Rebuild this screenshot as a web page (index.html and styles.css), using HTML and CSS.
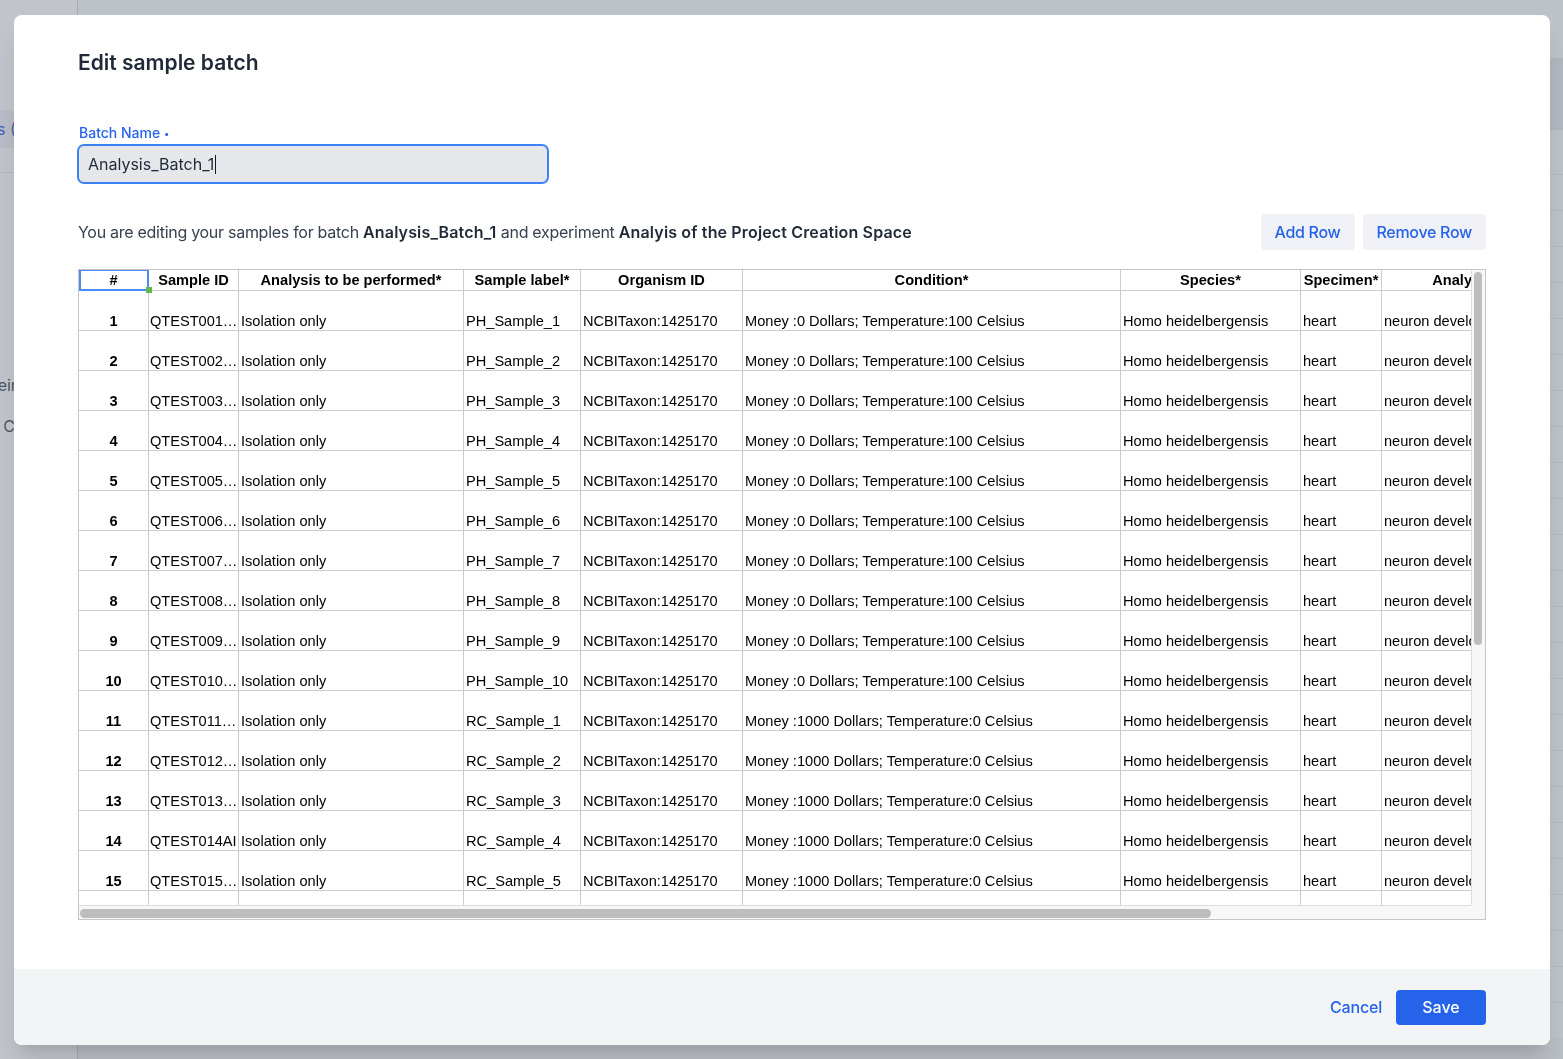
FILE: index.html
```html
<!DOCTYPE html>
<html lang="en">
<head>
<meta charset="utf-8">
<title>Edit sample batch</title>
<link rel="stylesheet" href="styles.css">
</head>
<body>
<div class="page">
  <aside class="sidebar">
    <div class="nav-item active"><span class="nav-text t1">Projects (2)</span></div>
    <div class="nav-sep"></div>
    <div class="nav-item lower"><span class="nav-text t2">Protein</span></div>
    <div class="nav-item"><span class="nav-text t3">Data C</span></div>
  </aside>
  <main class="main">
    <div class="main-head"></div>
    <div class="main-band"></div>
    <div class="bg-list">
      <div class="bg-row"></div><div class="bg-row"></div><div class="bg-row"></div><div class="bg-row"></div>
      <div class="bg-row"></div><div class="bg-row"></div><div class="bg-row"></div><div class="bg-row"></div>
      <div class="bg-row"></div><div class="bg-row"></div><div class="bg-row"></div><div class="bg-row"></div>
      <div class="bg-row"></div><div class="bg-row"></div><div class="bg-row"></div><div class="bg-row"></div>
      <div class="bg-row"></div><div class="bg-row"></div><div class="bg-row"></div><div class="bg-row"></div>
      <div class="bg-row"></div><div class="bg-row"></div><div class="bg-row"></div><div class="bg-row"></div>
    </div>
  </main>
</div>
<div class="overlay"></div>

<div class="modal">
  <div class="modal-body">
    <h2 class="title">Edit sample batch</h2>

    <div class="field">
      <label class="field-label">Batch Name <span class="req">•</span></label>
      <div class="input"><span class="input-text">Analysis_Batch_1</span><span class="caret"></span></div>
    </div>

    <div class="info-row">
      <p class="info">You are editing your samples for batch <b>Analysis_Batch_1</b> and experiment <b>Analyis of the Project Creation Space</b></p>
      <div class="actions">
        <button class="btn-soft">Add Row</button>
        <button class="btn-soft">Remove Row</button>
      </div>
    </div>

    <div class="grid">
      <div class="viewport">
        <table class="sheet">
          <colgroup>
            <col class="c-num"><col class="c-id"><col class="c-an"><col class="c-label"><col class="c-org"><col class="c-cond"><col class="c-spec"><col class="c-sp2"><col class="c-last">
          </colgroup>
          <thead>
            <tr>
              <th class="selected">#<span class="fill-handle"></span></th>
              <th>Sample ID</th>
              <th>Analysis to be performed*</th>
              <th>Sample label*</th>
              <th>Organism ID</th>
              <th>Condition*</th>
              <th>Species*</th>
              <th>Specimen*</th>
              <th>Analyte*</th>
            </tr>
          </thead>
          <tbody>
            <tr><td class="num">1</td><td class="id">QTEST001AE</td><td>Isolation only</td><td>PH_Sample_1</td><td>NCBITaxon:1425170</td><td>Money :0 Dollars; Temperature:100 Celsius</td><td>Homo heidelbergensis</td><td>heart</td><td>neuron development</td></tr>
            <tr><td class="num">2</td><td class="id">QTEST002AM</td><td>Isolation only</td><td>PH_Sample_2</td><td>NCBITaxon:1425170</td><td>Money :0 Dollars; Temperature:100 Celsius</td><td>Homo heidelbergensis</td><td>heart</td><td>neuron development</td></tr>
            <tr><td class="num">3</td><td class="id">QTEST003AU</td><td>Isolation only</td><td>PH_Sample_3</td><td>NCBITaxon:1425170</td><td>Money :0 Dollars; Temperature:100 Celsius</td><td>Homo heidelbergensis</td><td>heart</td><td>neuron development</td></tr>
            <tr><td class="num">4</td><td class="id">QTEST004AC</td><td>Isolation only</td><td>PH_Sample_4</td><td>NCBITaxon:1425170</td><td>Money :0 Dollars; Temperature:100 Celsius</td><td>Homo heidelbergensis</td><td>heart</td><td>neuron development</td></tr>
            <tr><td class="num">5</td><td class="id">QTEST005AK</td><td>Isolation only</td><td>PH_Sample_5</td><td>NCBITaxon:1425170</td><td>Money :0 Dollars; Temperature:100 Celsius</td><td>Homo heidelbergensis</td><td>heart</td><td>neuron development</td></tr>
            <tr><td class="num">6</td><td class="id">QTEST006AS</td><td>Isolation only</td><td>PH_Sample_6</td><td>NCBITaxon:1425170</td><td>Money :0 Dollars; Temperature:100 Celsius</td><td>Homo heidelbergensis</td><td>heart</td><td>neuron development</td></tr>
            <tr><td class="num">7</td><td class="id">QTEST007AB</td><td>Isolation only</td><td>PH_Sample_7</td><td>NCBITaxon:1425170</td><td>Money :0 Dollars; Temperature:100 Celsius</td><td>Homo heidelbergensis</td><td>heart</td><td>neuron development</td></tr>
            <tr><td class="num">8</td><td class="id">QTEST008AD</td><td>Isolation only</td><td>PH_Sample_8</td><td>NCBITaxon:1425170</td><td>Money :0 Dollars; Temperature:100 Celsius</td><td>Homo heidelbergensis</td><td>heart</td><td>neuron development</td></tr>
            <tr><td class="num">9</td><td class="id">QTEST009AH</td><td>Isolation only</td><td>PH_Sample_9</td><td>NCBITaxon:1425170</td><td>Money :0 Dollars; Temperature:100 Celsius</td><td>Homo heidelbergensis</td><td>heart</td><td>neuron development</td></tr>
            <tr><td class="num">10</td><td class="id">QTEST010AN</td><td>Isolation only</td><td>PH_Sample_10</td><td>NCBITaxon:1425170</td><td>Money :0 Dollars; Temperature:100 Celsius</td><td>Homo heidelbergensis</td><td>heart</td><td>neuron development</td></tr>
            <tr><td class="num">11</td><td class="id">QTEST011AO</td><td>Isolation only</td><td>RC_Sample_1</td><td>NCBITaxon:1425170</td><td>Money :1000 Dollars; Temperature:0 Celsius</td><td>Homo heidelbergensis</td><td>heart</td><td>neuron development</td></tr>
            <tr><td class="num">12</td><td class="id">QTEST012AW</td><td>Isolation only</td><td>RC_Sample_2</td><td>NCBITaxon:1425170</td><td>Money :1000 Dollars; Temperature:0 Celsius</td><td>Homo heidelbergensis</td><td>heart</td><td>neuron development</td></tr>
            <tr><td class="num">13</td><td class="id">QTEST013AX</td><td>Isolation only</td><td>RC_Sample_3</td><td>NCBITaxon:1425170</td><td>Money :1000 Dollars; Temperature:0 Celsius</td><td>Homo heidelbergensis</td><td>heart</td><td>neuron development</td></tr>
            <tr><td class="num">14</td><td class="id">QTEST014AI</td><td>Isolation only</td><td>RC_Sample_4</td><td>NCBITaxon:1425170</td><td>Money :1000 Dollars; Temperature:0 Celsius</td><td>Homo heidelbergensis</td><td>heart</td><td>neuron development</td></tr>
            <tr><td class="num">15</td><td class="id">QTEST015AG</td><td>Isolation only</td><td>RC_Sample_5</td><td>NCBITaxon:1425170</td><td>Money :1000 Dollars; Temperature:0 Celsius</td><td>Homo heidelbergensis</td><td>heart</td><td>neuron development</td></tr>
            <tr><td class="num">16</td><td class="id">QTEST016AP</td><td>Isolation only</td><td>RC_Sample_6</td><td>NCBITaxon:1425170</td><td>Money :1000 Dollars; Temperature:0 Celsius</td><td>Homo heidelbergensis</td><td>heart</td><td>neuron development</td></tr>
          </tbody>
        </table>
      </div>
      <div class="vscroll"><div class="vthumb"></div></div>
      <div class="hscroll"><div class="hthumb"></div></div>
      <div class="corner"></div>
    </div>
  </div>

  <div class="modal-footer">
    <button class="btn-link">Cancel</button>
    <button class="btn-primary">Save</button>
  </div>
</div>
</body>
</html>
```

FILE: styles.css
```css
* { box-sizing: border-box; }

html, body {
  margin: 0;
  padding: 0;
}

body {
  width: 1563px;
  height: 1059px;
  overflow: hidden;
  position: relative;
  font-family: Inter, "Noto Sans", "Liberation Sans", sans-serif;
  background: #f3f4f6;
}

/* ---------- background page ---------- */
.page {
  display: flex;
  height: 1059px;
}

.sidebar {
  width: 78px;
  flex: none;
  background: #ffffff;
  border-right: 1px solid #d1d5db;
  padding-top: 110px;
  overflow: hidden;
}

.nav-item {
  height: 38px;
  display: flex;
  align-items: center;
  white-space: nowrap;
  overflow: hidden;
  font-size: 16px;
  color: #374151;
}

.nav-item.active {
  background: #eef2f9;
  color: #1d4ed8;
}

.nav-text.t1 { margin-left: -56px; }
.nav-text.t2 { margin-left: -33px; }
.nav-text.t3 { margin-left: -36px; }

.nav-sep {
  height: 25px;
  border-bottom: 1px solid #e5e7eb;
}

.nav-item.lower {
  margin-top: 190px;
  height: 44px;
}

.main {
  flex: 1;
  display: flex;
  flex-direction: column;
}

.main-head {
  height: 58px;
  background: #f9fafb;
}

.main-band {
  height: 72px;
  background: #e5e7eb;
}

.bg-list {
  background: #f9fafb;
  padding-top: 44px;
}

.bg-row {
  height: 36px;
  border-top: 1px solid #e5e7eb;
}

.overlay {
  position: fixed;
  inset: 0;
  background: rgba(107, 114, 128, 0.42);
}

/* ---------- modal ---------- */
.modal {
  position: absolute;
  left: 14px;
  top: 15px;
  width: 1536px;
  height: 1030px;
  background: #ffffff;
  border-radius: 8px;
  overflow: hidden;
  display: flex;
  flex-direction: column;
  box-shadow: 0 20px 25px -5px rgba(0, 0, 0, 0.12), 0 10px 10px -5px rgba(0, 0, 0, 0.05);
}

.modal-body {
  flex: 1;
  padding: 34px 64px 0 64px;
}

.title {
  margin: 0;
  font-size: 21px;
  line-height: 28px;
  font-weight: 600;
  color: #1f2937;
}

.field {
  margin-top: 46px;
}

.field-label {
  display: block;
  font-size: 14px;
  line-height: 20px;
  font-weight: 500;
  color: #2563eb;
  padding-left: 1px;
}

.req {
  font-size: 10px;
  vertical-align: 1px;
}

.input {
  margin-top: 2px;
  width: 470px;
  height: 38px;
  display: flex;
  align-items: center;
  padding-left: 9px;
  background: #e5e7eb;
  border: 1px solid #3b82f6;
  box-shadow: 0 0 0 1px #3b82f6;
  border-radius: 6px;
  font-size: 16px;
  color: #1f2937;
}

.caret {
  width: 1px;
  height: 19px;
  background: #111827;
  margin-left: 1px;
}

.info-row {
  margin-top: 31px;
  height: 36px;
  display: flex;
  align-items: center;
  justify-content: space-between;
}

.info {
  margin: 0;
  font-size: 16px;
  line-height: 24px;
  color: #374151;
  letter-spacing: -0.28px;
}

.info b {
  font-weight: 600;
  color: #1f2937;
  letter-spacing: 0.15px;
}

.actions {
  display: flex;
  gap: 8px;
}

.btn-soft {
  height: 36px;
  padding: 0 14px;
  border: none;
  border-radius: 4px;
  background: #eff1f6;
  color: #2563eb;
  font-family: inherit;
  font-size: 16px;
  font-weight: 500;
  letter-spacing: -0.3px;
}

/* ---------- spreadsheet ---------- */
.grid {
  margin-top: 19px;
  width: 1408px;
  height: 651px;
  border: 1px solid #c6c6c6;
  display: grid;
  grid-template-columns: 1392px 14px;
  grid-template-rows: 635px 14px;
  background: #ffffff;
}

.viewport {
  overflow: hidden;
  position: relative;
}

.sheet {
  table-layout: fixed;
  border-collapse: separate;
  border-spacing: 0;
  width: 1463px;
  font-family: "Liberation Sans", Arial, sans-serif;
  font-size: 14.6px;
  color: #000000;
}

.c-num { width: 70px; }
.c-id { width: 90px; }
.c-an { width: 225px; }
.c-label { width: 117px; }
.c-org { width: 162px; }
.c-cond { width: 378px; }
.c-spec { width: 180px; }
.c-sp2 { width: 81px; }
.c-last { width: 160px; }

.sheet th,
.sheet td {
  border-right: 1px solid #cccccc;
  border-bottom: 1px solid #cccccc;
  padding: 0 0 0 2px;
  white-space: nowrap;
  overflow: hidden;
  text-overflow: ellipsis;
}

.sheet th {
  height: 21px;
  line-height: 20px;
  font-weight: bold;
  text-align: center;
  vertical-align: middle;
  overflow: visible;
  padding: 0 1px;
}

.sheet th.selected {
  position: relative;
}

.sheet td {
  height: 40px;
  line-height: 16px;
  padding-bottom: 1px;
  vertical-align: bottom;
  text-align: left;
}

.sheet td.id {
  padding-left: 1px;
  letter-spacing: -0.02px;
}

.sheet td.num {
  font-weight: bold;
  text-align: center;
  padding: 0 1px 1px 1px;
}

.sheet th.selected::after {
  content: "";
  position: absolute;
  left: 0;
  top: 0;
  right: -1px;
  bottom: -1px;
  border: 2px solid #4b89ff;
  border-top-width: 1px;
}

.fill-handle {
  position: absolute;
  right: -4px;
  bottom: -3px;
  width: 6px;
  height: 6px;
  background: #5fba4a;
  z-index: 2;
}

.vscroll {
  background: #f7f7f7;
  border-left: 1px solid #dddddd;
  padding: 2px 2px 0 2px;
}

.vthumb {
  width: 8px;
  height: 373px;
  border-radius: 4px;
  background: #bdbdbd;
}

.hscroll {
  background: #f7f7f7;
  border-top: 1px solid #dddddd;
  padding: 3px 0 0 1px;
}

.hthumb {
  width: 1131px;
  height: 9px;
  border-radius: 5px;
  background: #bdbdbd;
}

.corner {
  background: #f7f7f7;
}

/* ---------- footer ---------- */
.modal-footer {
  height: 76px;
  flex: none;
  background: #f3f4f6;
  display: flex;
  align-items: center;
  justify-content: flex-end;
  gap: 14px;
  padding: 0 64px;
}

.btn-link {
  border: none;
  background: transparent;
  padding: 0;
  font-family: inherit;
  font-size: 16px;
  font-weight: 500;
  letter-spacing: -0.2px;
  color: #2563eb;
}

.btn-primary {
  width: 90px;
  height: 35px;
  border: none;
  border-radius: 4px;
  background: #2563eb;
  color: #ffffff;
  font-family: inherit;
  font-size: 16px;
  font-weight: 500;
}
```
